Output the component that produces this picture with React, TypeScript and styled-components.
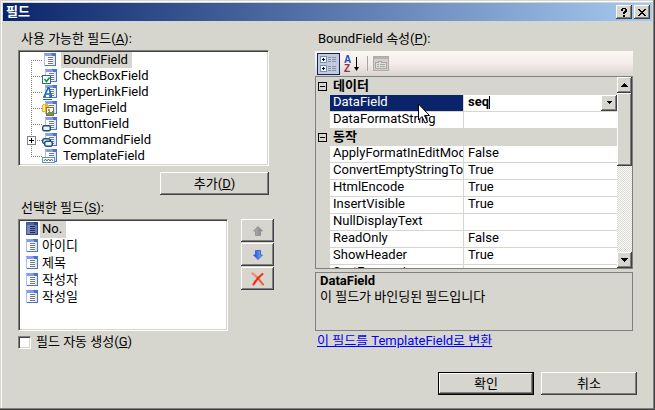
import React from "react";
import styled, { createGlobalStyle, css } from "styled-components";

const face = "#d6d5ce";
const shade = "#808080";
const dark = "#404040";
const navy = "#0a246a";

const GlobalStyle = createGlobalStyle`
  *, *::before, *::after { box-sizing: border-box; }
  body {
    margin: 0;
    background: ${face};
    color: #000;
    font: 13px/16px Roboto, "Noto Sans CJK KR", sans-serif;
  }
  button, input { font: inherit; color: inherit; margin: 0; }
  svg { display: block; flex: none; }
`;

const raised = css`
  background: ${face};
  border: 0;
  box-shadow: inset -1px -1px ${dark}, inset 1px 1px #fff, inset -2px -2px ${shade};
`;

const sunken = css`
  background: #fff;
  border: 1px solid;
  border-color: ${shade} #fff #fff ${shade};
  box-shadow: inset 1px 1px ${dark}, inset -1px -1px ${face};
  padding: 1px;
`;

const Dialog = styled.main`
  min-height: 100vh;
  display: flex;
  flex-direction: column;
  padding: 3px;
  background: ${face};
  box-shadow: inset -1px -1px ${dark}, inset -2px -2px ${shade}, inset 1px 1px ${face}, inset 2px 2px #fff;
`;

const TitleBar = styled.header`
  display: flex;
  align-items: center;
  gap: 2px;
  height: 18px;
  padding: 0 2px 0 3px;
  background: linear-gradient(90deg, ${navy}, #a6caf0);
`;

const Title = styled.h1`
  flex: 1;
  margin: 0;
  color: #fff;
  font-size: 13px;
  line-height: 16px;
  font-weight: 700;
`;

const CaptionButton = styled.button`
  ${raised}
  display: grid;
  place-items: center;
  width: 16px;
  height: 14px;
  padding: 0;
`;

const Body = styled.div`
  flex: 1;
  display: grid;
  grid-template-columns: minmax(0, 256fr) minmax(0, 318fr);
  column-gap: 41px;
  align-items: start;
  padding: 10px 19px 0 15px;
`;

const Column = styled.section`
  display: flex;
  flex-direction: column;
`;

const Caption = styled.h2<{ $gap?: number }>`
  margin: 0 0 ${(p) => p.$gap ?? 3}px;
  padding-left: 3px;
  font-size: 13px;
  line-height: 16px;
  font-weight: 400;
`;

const Available = styled.div`
  display: flex;
  flex-direction: column;
  align-items: flex-end;
  gap: 6px;
  margin: 0 5px 5px 0;
`;

const Tree = styled.ul`
  ${sunken}
  align-self: stretch;
  margin: 0;
  list-style: none;
`;

const TreeItem = styled.li`
  display: flex;
  height: 16px;
  padding-left: 6px;
`;

const ItemLabel = styled.span<{ $selected?: boolean }>`
  margin-left: 3px;
  padding: 0 4px 0 2px;
  background: ${(p) => (p.$selected ? face : "transparent")};
`;

const PushButton = styled.button<{ $default?: boolean; $width: number }>`
  ${raised}
  width: ${(p) => p.$width}px;
  height: 23px;
  padding: 0;
  ${(p) =>
    p.$default &&
    css`
      border: 1px solid #000;
    `}
`;

const Selected = styled.div`
  display: flex;
  gap: 13px;
`;

const ListBox = styled.ul`
  ${sunken}
  flex: 1;
  min-height: 112px;
  margin: 0;
  list-style: none;
`;

const ListItem = styled.li`
  display: flex;
  height: 17px;
  padding-left: 4px;
  ${ItemLabel} { margin-left: 0; }
`;

const SideButtons = styled.div`
  display: flex;
  flex-direction: column;
  gap: 1px;
`;

const IconButton = styled.button`
  ${raised}
  display: grid;
  place-items: center;
  width: 33px;
  height: 23px;
  padding: 0;
`;

const CheckLabel = styled.label`
  display: flex;
  align-items: center;
  gap: 5px;
  margin-top: 3px;
`;

const CheckBox = styled.input`
  ${sunken}
  appearance: none;
  width: 13px;
  height: 13px;
  &:checked { background: #fff radial-gradient(#000 3px, transparent 4px); }
`;

const Toolbar = styled.div`
  display: flex;
  align-items: center;
  height: 25px;
  padding: 0 2px;
  background: linear-gradient(#fbf7f5, #f3ecea 50%, #d9d3cd);
`;

const ToolButton = styled.button<{ $pressed?: boolean }>`
  display: grid;
  place-items: center;
  width: 23px;
  height: 22px;
  padding: 0;
  border: 1px solid ${(p) => (p.$pressed ? navy : "transparent")};
  background: ${(p) => (p.$pressed ? "#c3cad8" : "transparent")};
`;

const Separator = styled.span`
  width: 1px;
  height: 15px;
  margin: 0 1px 0 4px;
  background: #a6a6a6;
`;

const GridFrame = styled.div`
  position: relative;
  display: flex;
  height: 193px;
  border: 1px solid ${shade};
  overflow: hidden;
`;

const GridView = styled.div`
  flex: 1;
  min-width: 0;
  padding-top: 1px;
  overflow: hidden;
`;

const PropertyTable = styled.table`
  width: 100%;
  table-layout: fixed;
  border-collapse: separate;
  border-spacing: 0;
  line-height: 14px;
`;

const Gutter = styled.col`width: 14px;`;
const NameCol = styled.col`width: 134px;`;

const ToggleCell = styled.td`
  height: 17px;
  padding: 0 0 0 2px;
`;

const Category = styled.th`
  padding: 0 3px;
  vertical-align: top;
  line-height: 16px;
  text-align: left;
  font-weight: 700;
`;

const NameCell = styled.th<{ $active?: boolean }>`
  height: 17px;
  padding: 0 0 0 3px;
  border: 0 solid ${face};
  border-width: 0 1px 1px 0;
  background: ${(p) => (p.$active ? navy : "#fff")};
  background-clip: padding-box;
  color: ${(p) => (p.$active ? "#fff" : "#000")};
  text-align: left;
  vertical-align: top;
  font-weight: 400;
  white-space: nowrap;
  overflow: hidden;
`;

const ValueCell = styled.td`
  padding: 0 0 0 4px;
  border-bottom: 1px solid ${face};
  background: #fff;
  vertical-align: top;
  white-space: nowrap;
`;

const Editor = styled.div`
  display: flex;
  height: 16px;
`;

const ValueInput = styled.input`
  field-sizing: content;
  height: 14px;
  padding: 0;
  border: 0;
  outline: 0;
  background: transparent;
  font-weight: 700;
`;

const Caret = styled.span`
  width: 1px;
  height: 13px;
  margin: 1px auto 0 0;
  background: #000;
`;

const DropButton = styled.button`
  ${raised}
  display: grid;
  place-items: center;
  width: 16px;
  height: 16px;
  padding: 0;
`;

const ScrollBar = styled.div`
  display: flex;
  flex-direction: column;
  width: 15px;
  background: repeating-conic-gradient(#fff 0 25%, ${face} 0 50%) 0 0 / 2px 2px;
`;

const ScrollButton = styled(DropButton)`
  width: 15px;
`;

const Thumb = styled.div`
  ${raised}
  height: 73px;
  margin-bottom: auto;
`;

const Pointer = styled.svg`
  position: absolute;
  left: 102px;
  top: 26px;
  pointer-events: none;
`;

const Description = styled.div`
  min-height: 59px;
  margin-top: 3px;
  padding: 0 4px;
  border: 1px solid ${shade};
`;

const DescriptionTitle = styled.h3`
  margin: 0;
  font-size: 13px;
  line-height: 16px;
`;

const DescriptionText = styled.p`
  margin: 0;
`;

const ConvertLink = styled.a`
  align-self: flex-start;
  margin: 2px 0 0 2px;
  color: #00f;
  text-decoration: underline;
`;

const Footer = styled.footer`
  display: flex;
  justify-content: flex-end;
  gap: 7px;
  padding: 22px 15px 12px;
`;

type Kind = "bound" | "check" | "link" | "image" | "button" | "command" | "template";

function Sheet({ x, y, dim }: { x: number; y: number; dim?: boolean }) {
  return (
    <g transform={`translate(${x} ${y})`}>
      <rect width="12" height="13" fill={dim ? "#2c4385" : "#4a74d4"} />
      <rect width="1" height="13" fill={dim ? "#46599a" : "#a9bdf6"} />
      <rect width="7" height="1" fill={dim ? "#46599a" : "#8c9cf6"} />
      <rect x="1" y="1" width="7" height="2" fill={dim ? "#4b62ac" : "#7f9df4"} />
      <rect x="1" y="3" width="10" height="9" fill={dim ? "#7787b4" : "#fff"} />
      <rect x="9" y="3" width="2" height="9" fill={dim ? "#6878ab" : "#dfe8fb"} />
      <path d="M4 4.500h5M4 6.500h5M4 8.500h5M4 10.500h5" stroke={dim ? "#1c2d63" : "#77777b"} />
    </g>
  );
}

function FieldIcon({ kind = "bound", dim }: { kind?: Kind; dim?: boolean }) {
  return (
    <svg width="16" height="16" viewBox="0 0 16 16" shapeRendering="crispEdges" aria-hidden="true">
      <Sheet x={kind === "bound" ? 2 : 3} y={1} dim={dim} />
      {kind === "check" && (
        <>
          <rect x=".5" y="7.500" width="8" height="8" fill="#fff" stroke="#34648f" />
          <path d="M2.500 11l2 2.500L7.500 9.500" fill="none" stroke="#119b27" strokeWidth="1.600" shapeRendering="auto" />
        </>
      )}
      {kind === "link" && (
        <>
          <path d="M2 13L6 4h1l2.500 9M3.500 10H8M1 13h3M7 13h3" fill="none" stroke="#1768b5" strokeWidth="1.600" shapeRendering="auto" />
          <path d="M1 15.500h9" stroke="#1768b5" />
        </>
      )}
      {kind === "image" && (
        <>
          <path d="M0 5h1V4h5v1h1v7H0z" fill="#e8b52b" />
          <path d="M1 5h2v6H1z" fill="#ffe98b" />
          <rect x="4.500" y="7.500" width="7" height="8" fill="#fff" stroke="#936a35" />
          <path d="M5 15v-2l2-2 2 1 1-1 1 1v3z" fill="#5b9a57" />
          <path d="M6 9h2v2H6z" fill="#e07b43" />
        </>
      )}
      {kind === "button" && (
        <rect x=".7" y="9.700" width="7.600" height="5" rx="1.500" fill="#edf5fb" stroke="#174f7f" strokeWidth="1.400" shapeRendering="auto" />
      )}
      {kind === "command" && (
        <g fill="#edf5fb" stroke="#174f7f" strokeWidth="1.400" shapeRendering="auto">
          <rect x=".7" y="6.700" width="7.600" height="5" rx="2" />
          <rect x="2.700" y="9.200" width="7.600" height="5" rx="2" />
        </g>
      )}
      {kind === "template" && (
        <>
          <rect x=".5" y="9.500" width="12" height="5" fill="#fff" stroke="#5b95c8" />
          <path d="M2 13l1.500-2L5 13l1.500-2L8 13l1.500-2L11 13" fill="none" stroke="#5c6470" shapeRendering="auto" />
        </>
      )}
    </svg>
  );
}

function Branch({ first, last, expandable }: { first?: boolean; last?: boolean; expandable?: boolean }) {
  return (
    <svg width="16" height="16" viewBox="0 0 16 16" shapeRendering="crispEdges" aria-hidden="true">
      <path d={`M5.500 ${first ? 8 : 0}V${last ? 9 : 16}M5 8.500H16`} stroke="#808080" strokeDasharray="1 1" />
      {expandable && (
        <>
          <rect x="1.500" y="4.500" width="8" height="8" fill="#fff" stroke="#808080" />
          <path d="M3 8.500h5M5.500 6v5" stroke="#000" />
        </>
      )}
    </svg>
  );
}

function Triangle({ up, small }: { up?: boolean; small?: boolean }) {
  return (
    <svg width="7" height="4" viewBox="0 0 7 4" shapeRendering="crispEdges" aria-hidden="true">
      <path d={up ? "M3 0h1v1h1v1h1v1h1v1H0V3h1V2h1V1h1z" : small ? "M1 0h5v1H5v1H4v1H3V2H2V1H1z" : "M0 0h7v1H6v1H5v1H4v1H3V3H2V2H1V1H0z"} />
    </svg>
  );
}

function Arrow({ down }: { down?: boolean }) {
  const id = down ? "arrow-blue" : "arrow-gray";
  return (
    <svg width="10" height="10" viewBox="0 0 10 10" aria-hidden="true">
      <defs>
        <linearGradient id={id} x1="0" x2="1">
          <stop offset="0" stopColor={down ? "#86aefc" : "#b4b4b4"} />
          <stop offset="1" stopColor={down ? "#164ed4" : "#828282"} />
        </linearGradient>
      </defs>
      <path
        d="M5 .5L9.500 5H7.500v4.500h-5V5H.5z"
        fill={`url(#${id})`}
        stroke={down ? "#2858c8" : "#8c8c8c"}
        strokeWidth=".8"
        transform={down ? "rotate(180 5 5)" : undefined}
      />
    </svg>
  );
}

function DeleteIcon() {
  return (
    <svg width="14" height="14" viewBox="0 0 14 14" fill="none" strokeLinecap="round" aria-hidden="true">
      <path d="M1.500 1.500C5 4 9 8 12 12.500" stroke="#f4553c" strokeWidth="2" />
      <path d="M11.500 2C7.500 5 4.500 8.500 2.500 12.500" stroke="#f02c0c" strokeWidth="2" />
      <path d="M1.500 1.500L5 4.500" stroke="#ff8e78" strokeWidth="2" />
    </svg>
  );
}

function CategorizedIcon() {
  return (
    <svg width="17" height="16" viewBox="0 0 17 16" shapeRendering="crispEdges" aria-hidden="true">
      {[0, 9].map((y) => (
        <g key={y} transform={`translate(0 ${y})`}>
          <rect x=".5" y=".5" width="6" height="6" fill="#fff" stroke="#6f8fc8" />
          <path d="M2 3.500h3M3.500 2v3" stroke="#000" />
          <path d="M8 1.500h3M8 3.500h3M8 5.500h3M12 1.500h4M12 3.500h4M12 5.500h4" stroke="#8792ac" />
        </g>
      ))}
    </svg>
  );
}

function SortIcon() {
  return (
    <svg width="17" height="18" viewBox="0 0 17 18" aria-hidden="true">
      <g fontFamily="Liberation Sans, sans-serif" fontWeight="700" fontSize="10">
        <text x="1" y="8" fill="#2350b0">A</text>
        <text x="1" y="17" fill="#963038">Z</text>
      </g>
      <path d="M13.500 2v13" stroke="#000" shapeRendering="crispEdges" />
      <path d="M11 12h5l-2.500 4z" />
    </svg>
  );
}

function PagesIcon() {
  return (
    <svg width="16" height="15" viewBox="0 0 16 15" fill="none" shapeRendering="crispEdges" aria-hidden="true">
      <rect x=".5" y=".5" width="15" height="14" fill="#d2cfcc" stroke="#adaba8" />
      <path d="M1 2h14" stroke="#b4b2af" strokeWidth="2" />
      <path d="M2.500 6.500h3v-1h3v1h5v6h-11z" fill="#e0dedb" stroke="#a9a7a4" />
      <path d="M4 8.500h2M7 8.500h5M4 10.500h2M7 10.500h5" stroke="#a9a7a4" />
    </svg>
  );
}

function CollapseIcon() {
  return (
    <svg width="9" height="9" viewBox="0 0 9 9" fill="none" stroke="#000" shapeRendering="crispEdges" aria-hidden="true">
      <rect x=".5" y=".5" width="8" height="8" />
      <path d="M2 4.500h5" />
    </svg>
  );
}

const fields: { name: string; kind: Kind }[] = [
  { name: "BoundField", kind: "bound" },
  { name: "CheckBoxField", kind: "check" },
  { name: "HyperLinkField", kind: "link" },
  { name: "ImageField", kind: "image" },
  { name: "ButtonField", kind: "button" },
  { name: "CommandField", kind: "command" },
  { name: "TemplateField", kind: "template" },
];

const chosen = ["No.", "아이디", "제목", "작성자", "작성일"];

const behavior: [string, string][] = [
  ["ApplyFormatInEditMode", "False"],
  ["ConvertEmptyStringToNull", "True"],
  ["HtmlEncode", "True"],
  ["InsertVisible", "True"],
  ["NullDisplayText", ""],
  ["ReadOnly", "False"],
  ["ShowHeader", "True"],
  ["SortExpression", ""],
];

function CategoryRow({ name }: { name: string }) {
  return (
    <tr>
      <ToggleCell><CollapseIcon /></ToggleCell>
      <Category colSpan={2}>{name}</Category>
    </tr>
  );
}

function PropertyRow({ name, value }: { name: string; value: string }) {
  return (
    <tr>
      <td />
      <NameCell scope="row">{name}</NameCell>
      <ValueCell>{value}</ValueCell>
    </tr>
  );
}

export default function App() {
  return (
    <>
      <GlobalStyle />
      <Dialog>
        <TitleBar>
          <Title>필드</Title>
          <CaptionButton aria-label="도움말">
            <svg width="8" height="9" viewBox="0 0 8 9" shapeRendering="crispEdges">
              <path d="M1 1h1V0h4v1h1v3H6v1H5v1H3V4h1V3h1V1H3v2H1zM3 7h2v2H3z" />
            </svg>
          </CaptionButton>
          <CaptionButton aria-label="닫기">
            <svg width="8" height="7" viewBox="0 0 8 7" shapeRendering="crispEdges">
              <path d="M0 0h2v1h1v1h2V1h1V0h2v1H7v1H6v1H5v1h1v1h1v1h1v1H6V6H5V5H3v1H2v1H0V6h1V5h1V4h1V3H2V2H1V1H0z" />
            </svg>
          </CaptionButton>
        </TitleBar>

        <Body>
          <Column>
            <Caption>사용 가능한 필드(<u>A</u>):</Caption>
            <Available>
              <Tree>
                {fields.map((f, i) => (
                  <TreeItem key={f.name}>
                    <Branch first={i === 0} last={i === fields.length - 1} expandable={f.kind === "command"} />
                    <FieldIcon kind={f.kind} />
                    <ItemLabel $selected={i === 0}>{f.name}</ItemLabel>
                  </TreeItem>
                ))}
              </Tree>
              <PushButton $width={109}>추가(<u>D</u>)</PushButton>
            </Available>

            <Caption>선택한 필드(<u>S</u>):</Caption>
            <Selected>
              <ListBox>
                {chosen.map((name, i) => (
                  <ListItem key={name}>
                    <FieldIcon dim={i === 0} />
                    <ItemLabel $selected={i === 0}>{name}</ItemLabel>
                  </ListItem>
                ))}
              </ListBox>
              <SideButtons>
                <IconButton aria-label="위로"><Arrow /></IconButton>
                <IconButton aria-label="아래로"><Arrow down /></IconButton>
                <IconButton aria-label="삭제"><DeleteIcon /></IconButton>
              </SideButtons>
            </Selected>
            <CheckLabel>
              <CheckBox type="checkbox" />
              <span>필드 자동 생성(<u>G</u>)</span>
            </CheckLabel>
          </Column>

          <Column>
            <Caption $gap={4}>BoundField 속성(<u>P</u>):</Caption>
            <Toolbar>
              <ToolButton $pressed aria-label="항목별"><CategorizedIcon /></ToolButton>
              <ToolButton aria-label="사전순"><SortIcon /></ToolButton>
              <Separator />
              <ToolButton disabled aria-label="속성 페이지"><PagesIcon /></ToolButton>
            </Toolbar>
            <GridFrame>
              <GridView>
                <PropertyTable>
                  <colgroup><Gutter /><NameCol /><col /></colgroup>
                  <tbody>
                    <CategoryRow name="데이터" />
                    <tr>
                      <td />
                      <NameCell scope="row" $active>DataField</NameCell>
                      <ValueCell>
                        <Editor>
                          <ValueInput defaultValue="seq" aria-label="DataField" />
                          <Caret />
                          <DropButton aria-label="값 목록"><Triangle small /></DropButton>
                        </Editor>
                      </ValueCell>
                    </tr>
                    <PropertyRow name="DataFormatString" value="" />
                    <CategoryRow name="동작" />
                    {behavior.map(([name, value]) => (
                      <PropertyRow key={name} name={name} value={value} />
                    ))}
                  </tbody>
                </PropertyTable>
              </GridView>
              <ScrollBar>
                <ScrollButton aria-label="위로 스크롤"><Triangle up /></ScrollButton>
                <Thumb />
                <ScrollButton aria-label="아래로 스크롤"><Triangle /></ScrollButton>
              </ScrollBar>
              <Pointer width="12" height="21" viewBox="0 0 12 21" aria-hidden="true">
                <path d="M.5 1v16l3.500-3.500 3 6.500 2.500-1-3-6.500h5z" fill="#fff" stroke="#000" />
              </Pointer>
            </GridFrame>
            <Description>
              <DescriptionTitle>DataField</DescriptionTitle>
              <DescriptionText>이 필드가 바인딩된 필드입니다</DescriptionText>
            </Description>
            <ConvertLink href="#convert">이 필드를 TemplateField로 변환</ConvertLink>
          </Column>
        </Body>

        <Footer>
          <PushButton $width={96} $default>확인</PushButton>
          <PushButton $width={96}>취소</PushButton>
        </Footer>
      </Dialog>
    </>
  );
}
